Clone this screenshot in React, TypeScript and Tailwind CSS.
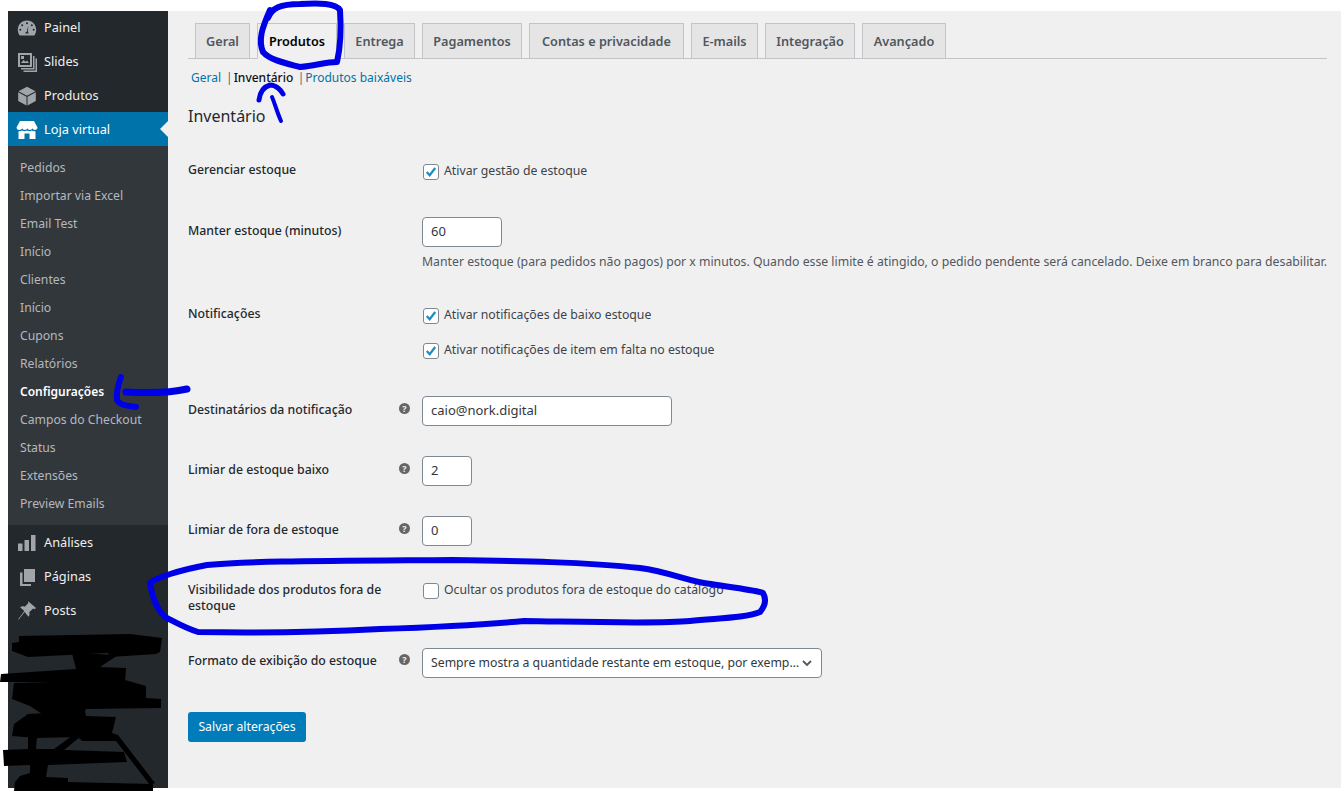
import type { ReactNode } from "react"

const font = "font-['Noto_Sans','Open_Sans',sans-serif]"

const tabs = [
  { label: "Geral", width: "w-[55px]" },
  { label: "Produtos", width: "w-[80px]", active: true },
  { label: "Entrega", width: "w-[71px]" },
  { label: "Pagamentos", width: "w-[100px]" },
  { label: "Contas e privacidade", width: "w-[155px]" },
  { label: "E-mails", width: "w-[67px]" },
  { label: "Integração", width: "w-[90px]" },
  { label: "Avançado", width: "w-[84px]" },
]

const subItems = [
  "Pedidos",
  "Importar via Excel",
  "Email Test",
  "Início",
  "Clientes",
  "Início",
  "Cupons",
  "Relatórios",
  "Configurações",
  "Campos do Checkout",
  "Status",
  "Extensões",
  "Preview Emails",
]

function DashboardIcon() {
  return (
    <svg viewBox="0 0 20 20" className="h-[20px] w-[20px]" fill="currentColor">
      <path d="M10 2.5C4.8 2.5.8 6.6.8 11.8c0 2.2.7 4 1.9 5.7h14.6c1.2-1.7 1.9-3.500 1.900-5.700 0-5.200-4-9.300-9.200-9.300zM10 4.300a1 1 0 1 1 0 2 1 1 0 0 1 0-2zM5.200 6.300a1 1 0 1 1 0 2 1 1 0 0 1 0-2zM14.800 6.300a1 1 0 1 1 0 2 1 1 0 0 1 0-2zM3.300 10.800a1 1 0 1 1 0 2 1 1 0 0 1 0-2zM16.700 10.800a1 1 0 1 1 0 2 1 1 0 0 1 0-2zM11.300 7.800l-.4 6.200c.5.400.8.900.8 1.500H8.300c0-.900.7-1.700 1.500-1.800z" fillRule="evenodd" />
    </svg>
  )
}

function SlidesIcon() {
  return (
    <svg viewBox="0 0 20 20" className="h-[20px] w-[20px]" fill="currentColor">
      <path d="M1 1h14v14H1zM3 3v10h10V3zM4 11l2.500-3 2 1.800L10 8.500l2 2.500zM4 4h3v3H4zM16 4h1.500v13.500H4V16h12zM18.500 6.500H20V20H6.500v-1.500h12z" fillRule="evenodd" />
    </svg>
  )
}

function CubeIcon() {
  return (
    <svg viewBox="0 0 20 20" className="h-[20px] w-[20px]" fill="currentColor">
      <path d="M10 .8l8.500 4.400-8.500 4.500-8.500-4.500zM1.200 6.300l8.300 4.400v8.700L1.200 15zM18.800 6.300v8.700l-8.300 4.400v-8.700z" />
    </svg>
  )
}

function StoreIcon() {
  return (
    <svg viewBox="0 0 22 20" className="h-[20px] w-[22px]" fill="currentColor">
      <path d="M4 1h14l3.500 6.500c0 1.400-1.200 2.500-2.600 2.500-1.100 0-2.100-.7-2.500-1.700-.4 1-1.300 1.700-2.600 1.700-1.200 0-2.100-.7-2.500-1.700C10.900 9.300 10 10 8.700 10 7.500 10 6.600 9.300 6.200 8.300 5.800 9.300 4.800 10 3.100 10 1.700 10 .5 8.900.5 7.500z" />
      <path d="M2.500 11.200c1.300.3 2.700 0 3.700-.7 1.500 1 3.300 1 4.800 0 1.500 1 3.300 1 4.800 0 1 .7 2.400 1 3.700.7V19h-6v-5.500H8.500V19h-6z" />
    </svg>
  )
}

function BarsIcon() {
  return (
    <svg viewBox="0 0 20 20" className="h-[20px] w-[20px]" fill="currentColor">
      <path d="M1 10.500h4.500V18H1zM7.500 7h4.500v11H7.500zM14 2h4.500v16H14z" />
    </svg>
  )
}

function PagesIcon() {
  return (
    <svg viewBox="0 0 20 20" className="h-[20px] w-[20px]" fill="currentColor">
      <path d="M7 2h11v13H7zM3 5.500h2.500V17H14v2H3z" />
    </svg>
  )
}

function PinIcon() {
  return (
    <svg viewBox="0 0 20 20" className="h-[20px] w-[20px]" fill="currentColor">
      <path d="M11.500.5l7.500 6.500-1.500 1.200-1.400-.6-3.900 3.600c.7 1.700.3 3.200-.7 4.600L7.600 11 2 18.200 1 19l.6-1.300 5.700-7.700-4.200-3.700c1.400-1 3.100-1.300 4.700-.5l3.600-3.800-.6-1.300z" />
    </svg>
  )
}

function HelpIcon() {
  return (
    <span className="flex h-[11px] w-[11px] items-center justify-center rounded-full bg-[#666666] text-[9px] leading-none font-bold text-[#f0f0f1]">
      ?
    </span>
  )
}

function MenuItem({ icon, label, active, height = "h-[34px]" }: { icon: ReactNode; label: string; active?: boolean; height?: string }) {
  return (
    <div className={`relative flex items-center ${height} ${active ? "bg-[#0073aa] pt-[1px] text-white" : "text-[#eeeeee]"}`}>
      <span className={`flex w-[36px] justify-center pl-[1px] ${active ? "text-white" : "text-[#a0a5aa]"}`}>{icon}</span>
      <span className="text-[12.75px]">{label}</span>
      {active && (
        <span className="absolute right-0 top-[9px] border-y-[8px] border-r-[8px] border-y-transparent border-r-[#f0f0f1]" />
      )}
    </div>
  )
}

function Sidebar() {
  return (
    <aside className="w-[160px] shrink-0 bg-[#23282d]">
      <MenuItem icon={<DashboardIcon />} label="Painel" />
      <MenuItem icon={<SlidesIcon />} label="Slides" />
      <MenuItem icon={<CubeIcon />} label="Produtos" height="h-[33px]" />
      <MenuItem icon={<StoreIcon />} label="Loja virtual" active />
      <div className="bg-[#32373c] pb-[7px] pt-[8px]">
        {subItems.map((item, i) => (
          <div
            key={i}
            className={`flex h-[28px] items-center pl-[12px] ${
              item === "Configurações" ? "text-[12px] font-semibold text-white" : "text-[12.2px] text-[#b4b9be]"
            }`}
          >
            {item}
          </div>
        ))}
      </div>
      <div className="pt-[1px]">
        <MenuItem icon={<BarsIcon />} label="Análises" />
        <MenuItem icon={<PagesIcon />} label="Páginas" />
        <MenuItem icon={<PinIcon />} label="Posts" />
      </div>
    </aside>
  )
}

function Tabs() {
  return (
    <div className="flex h-[36px] gap-[7px] border-b border-[#c3c4c7] pl-[7px]">
      {tabs.map((tab) => (
        <div
          key={tab.label}
          className={`flex h-[36px] items-center justify-center border border-[#c3c4c7] pt-[1px] text-[12.7px] font-semibold ${tab.width} ${
            tab.active ? "border-b-[#f0f0f1] bg-[#f0f0f1] text-black" : "bg-[#e5e5e5] text-[#50575e]"
          }`}
        >
          {tab.label}
        </div>
      ))}
    </div>
  )
}

function SubNav() {
  return (
    <div className="mt-[10px] flex h-[18px] items-center pl-[3px] text-[12px] text-[#0073aa]">
      <span className="w-[35px]">Geral</span>
      <span className="text-[#666666]">|</span>
      <span className="ml-[1px] w-[64px] font-medium text-[#111111]">Inventário</span>
      <span className="text-[#666666]">|</span>
      <span className="ml-[1px]">Produtos baixáveis</span>
    </div>
  )
}

function Check({ checked }: { checked?: boolean }) {
  return (
    <span className="flex h-[16px] w-[16px] shrink-0 items-center justify-center rounded-[3px] border border-[#7e8993] bg-white">
      {checked && (
        <svg viewBox="0 0 16 16" className="h-[14px] w-[14px]" fill="none" stroke="#1e8cbe" strokeWidth="2.600">
          <path d="M3.200 8l3.300 3.600L12.800 3.500" />
        </svg>
      )}
    </span>
  )
}

function CheckRow({ checked, label, className = "" }: { checked?: boolean; label: string; className?: string }) {
  return (
    <div className={`flex h-[16px] items-center gap-[5px] pl-[1px] text-[12.25px] text-[#3c434a] ${className}`}>
      <Check checked={checked} />
      <span className="relative -top-[1px]">{label}</span>
    </div>
  )
}

function TextField({ value, width }: { value: string; width: string }) {
  return (
    <div className={`flex h-[30px] items-center rounded-[4px] border border-[#7e8993] bg-white pl-[8px] text-[13px] text-[#32373c] ${width}`}>
      {value}
    </div>
  )
}

function Row({
  label,
  help,
  top,
  labelTop,
  children,
}: {
  label: ReactNode
  help?: boolean
  top: string
  labelTop: string
  children: ReactNode
}) {
  return (
    <div className={`flex items-start ${top}`}>
      <div className={`relative w-[234px] shrink-0 pr-[20px] text-[12.3px] leading-[16px] font-medium text-[#23282d] ${labelTop}`}>
        {label}
        {help && (
          <span className="absolute right-[12px] top-[1px]">
            <HelpIcon />
          </span>
        )}
      </div>
      <div className="min-w-0 flex-1">{children}</div>
    </div>
  )
}

function Scribbles() {
  return (
    <svg className="pointer-events-none absolute inset-0" width="1341" height="791" viewBox="0 0 1341 791">
      <g fill="none" stroke="#0000e6" strokeLinecap="round" strokeLinejoin="round">
        <path strokeWidth="6" d="M268 18 C272 8 280 4 300 4 C320 3 335 3 340 10 C341 25 341 45 337 62 C325 62 315 66 300 67 C285 63 270 60 263 52 C258 40 262 28 270 10" />
        <path strokeWidth="5" d="M259 100 C260 92 263 87 270 85 C276 85 281 90 283 94" />
        <path strokeWidth="4" d="M272 97 C275 104 277 112 281 121" />
        <path strokeWidth="6" d="M121 377 C118 385 116 392 117 400 C119 405 128 406 136 407" />
        <path strokeWidth="7" d="M126 392 C145 393 170 393 187 389" />
        <path strokeWidth="6" d="M150 583 C155 578 180 570 207 565 C250 561 320 561 452 560 C520 561 586 562 640 568 C670 572 690 582 711 584 C735 588 755 590 763 593 C767 600 765 606 760 612 C745 618 720 618 690 621 C660 624 590 622 524 621 C480 625 440 627 380 629 C320 632 250 633 198 632 C185 628 175 622 165 617 C155 607 152 595 150 583" />
      </g>
      <g fill="#000000">
        <path d="M19 636 L130 634 L162 638 L160 652 L156 654 L110 657 L108 653 L28 657 L12 651 L12 643 L19 642 Z" />
        <path d="M72 653 L118 655 L100 667 L126 668 L125 682 L0 682 L1 674 L76 669 Z" />
        <path d="M14 683 L125 680 L146 686 L146 698 L161 699 L161 708 L86 709 L84 713 L42 714 L30 706 L12 699 Z" />
        <path d="M28 714 L85 711 L86 716 L116 717 L112 733 L118 735 L155 783 L150 785 L116 741 L82 741 L78 737 L36 738 L12 736 L14 724 Z" />
        <path d="M28 736 L37 736 L36 749 L54 749 L84 727 L90 729 L64 750 L124 752 L127 762 L48 765 L46 777 L68 778 L68 782 L153 784 L153 791 L14 791 L15 782 L20 776 L30 773 L30 765 L4 766 L3 750 L28 749 Z" />
      </g>
    </svg>
  )
}

export default function App() {
  return (
    <div className={`relative h-[791px] overflow-hidden bg-white ${font}`}>
      <div className="flex h-[788px] pl-[8px] pt-[11px]">
        <Sidebar />
        <main className="flex-1 bg-[#f0f0f1] px-[20px] pt-[12px]">
          <Tabs />
          <SubNav />
          <h2 className="mt-[18px] text-[16px] leading-[22px] text-[#23282d]">Inventário</h2>

          <Row label="Gerenciar estoque" top="mt-[37px]" labelTop="-mt-[2px]">
            <CheckRow checked label="Ativar gestão de estoque" />
          </Row>

          <Row label="Manter estoque (minutos)" top="mt-[37px]" labelTop="mt-[6px]">
            <TextField value="60" width="w-[80px]" />
            <p className="mt-[7px] whitespace-nowrap text-[12.25px] leading-[16px] text-[#50575e]">
              Manter estoque (para pedidos não pagos) por x minutos. Quando esse limite é atingido, o pedido pendente será cancelado. Deixe em branco para desabilitar.
            </p>
          </Row>

          <Row label="Notificações" top="mt-[38px]" labelTop="-mt-[2px]">
            <CheckRow checked label="Ativar notificações de baixo estoque" />
            <CheckRow checked label="Ativar notificações de item em falta no estoque" className="mt-[19px]" />
          </Row>

          <Row label="Destinatários da notificação" help top="mt-[37px]" labelTop="mt-[6px]">
            <TextField value="caio@nork.digital" width="w-[250px]" />
          </Row>

          <Row label="Limiar de estoque baixo" help top="mt-[30px]" labelTop="mt-[6px]">
            <TextField value="2" width="w-[50px]" />
          </Row>

          <Row label="Limiar de fora de estoque" help top="mt-[30px]" labelTop="mt-[6px]">
            <TextField value="0" width="w-[50px]" />
          </Row>

          <Row label="Visibilidade dos produtos fora de estoque" top="mt-[36px]" labelTop="mt-0">
            <CheckRow label="Ocultar os produtos fora de estoque do catálogo" className="mt-[1px]" />
          </Row>

          <Row label="Formato de exibição do estoque" help top="mt-[34px]" labelTop="mt-[5px]">
            <div className="flex h-[30px] w-[400px] items-center justify-between rounded-[4px] border border-[#7e8993] bg-white pl-[8px] pr-[8px] text-[12.25px] text-[#32373c]">
              <span className="truncate">Sempre mostra a quantidade restante em estoque, por exemplo, "12 em estoque"</span>
              <svg viewBox="0 0 12 12" className="h-[12px] w-[12px] shrink-0" fill="none" stroke="#50575e" strokeWidth="1.800">
                <path d="M2 4l4 4 4-4" />
              </svg>
            </div>
          </Row>

          <button className="mt-[34px] flex h-[30px] w-[118px] items-center justify-center rounded-[3px] bg-[#007cba] text-[12.25px] text-white">
            Salvar alterações
          </button>
        </main>
      </div>
      <Scribbles />
    </div>
  )
}
